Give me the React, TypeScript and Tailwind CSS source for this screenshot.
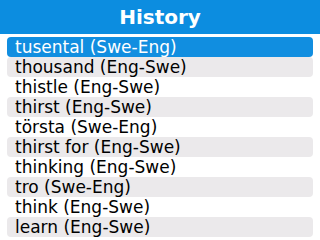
const items = [
  "tusental (Swe-Eng)",
  "thousand (Eng-Swe)",
  "thistle (Eng-Swe)",
  "thirst (Eng-Swe)",
  "törsta (Swe-Eng)",
  "thirst for (Eng-Swe)",
  "thinking (Eng-Swe)",
  "tro (Swe-Eng)",
  "think (Eng-Swe)",
  "learn (Eng-Swe)",
];

export default function App() {
  return (
    <div className="h-[240px] w-[320px] overflow-hidden bg-white font-['DejaVu_Sans',sans-serif]">
      <div className="flex h-[34px] items-center justify-center bg-[#0c8de0]">
        <h1 className="text-[20px] font-bold leading-none text-white">History</h1>
      </div>
      <ul className="mt-[3px] flex flex-col px-[7px]">
        {items.map((item, i) => (
          <li
            key={item}
            className={
              i === 0
                ? "h-[20px] rounded-[4px] bg-[#118ee0] pl-[8px] text-[17px] leading-[20px] text-white"
                : i % 2 === 1
                  ? "h-[20px] rounded-[4px] bg-[#ebe9eb] pl-[8px] text-[17px] leading-[20px] text-black"
                  : "h-[20px] pl-[8px] text-[17px] leading-[20px] text-black"
            }
          >
            {item}
          </li>
        ))}
      </ul>
    </div>
  );
}
